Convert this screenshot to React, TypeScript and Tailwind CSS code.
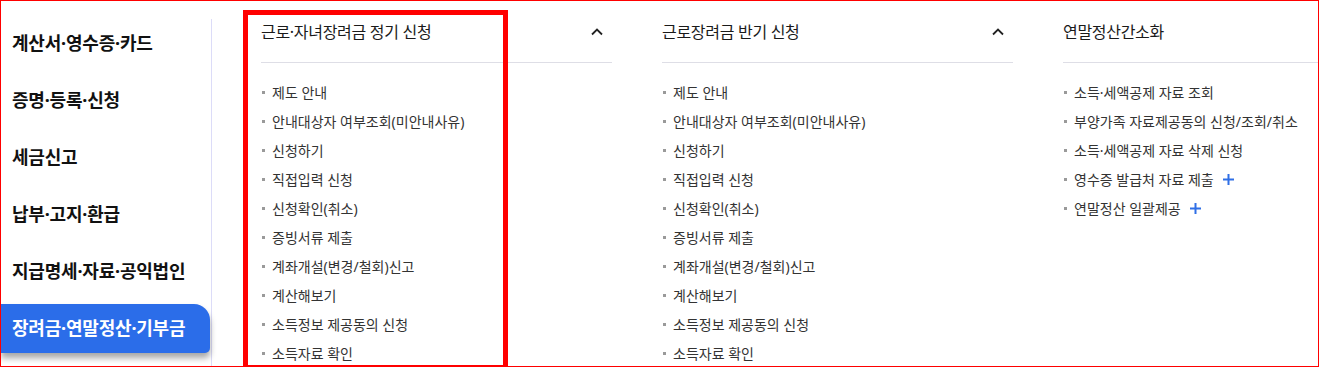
import React from 'react';

const sideMenu = [
    '계산서·영수증·카드',
    '증명·등록·신청',
    '세금신고',
    '납부·고지·환급',
    '지급명세·자료·공익법인',
    '장려금·연말정산·기부금',
];

type Item = { label: string; plus?: boolean };

const columns: { title: string; toggle: boolean; items: Item[] }[] = [
    {
        title: '근로·자녀장려금 정기 신청',
        toggle: true,
        items: [
            { label: '제도 안내' },
            { label: '안내대상자 여부조회(미안내사유)' },
            { label: '신청하기' },
            { label: '직접입력 신청' },
            { label: '신청확인(취소)' },
            { label: '증빙서류 제출' },
            { label: '계좌개설(변경/철회)신고' },
            { label: '계산해보기' },
            { label: '소득정보 제공동의 신청' },
            { label: '소득자료 확인' },
        ],
    },
    {
        title: '근로장려금 반기 신청',
        toggle: true,
        items: [
            { label: '제도 안내' },
            { label: '안내대상자 여부조회(미안내사유)' },
            { label: '신청하기' },
            { label: '직접입력 신청' },
            { label: '신청확인(취소)' },
            { label: '증빙서류 제출' },
            { label: '계좌개설(변경/철회)신고' },
            { label: '계산해보기' },
            { label: '소득정보 제공동의 신청' },
            { label: '소득자료 확인' },
        ],
    },
    {
        title: '연말정산간소화',
        toggle: false,
        items: [
            { label: '소득·세액공제 자료 조회' },
            { label: '부양가족 자료제공동의 신청/조회/취소' },
            { label: '소득·세액공제 자료 삭제 신청' },
            { label: '영수증 발급처 자료 제출', plus: true },
            { label: '연말정산 일괄제공', plus: true },
        ],
    },
];

const ChevronUp = () => (
    <svg width="12" height="8" viewBox="0 0 12 8" fill="none">
        <path d="M1 6.5 L6 1.5 L11 6.5" stroke="#222" strokeWidth="1.8" />
    </svg>
);

const Plus = () => (
    <svg width="11" height="11" viewBox="0 0 11 11" className="ml-[9px] shrink-0">
        <path d="M5.5 0 V11 M0 5.5 H11" stroke="#2f6fe6" strokeWidth="2" />
    </svg>
);

export default function App() {
    return (
        <div
            className="relative w-[1319px] h-[367px] overflow-hidden bg-white border border-[#ff0000] flex"
            style={{ fontFamily: '"Noto Sans", "Noto Sans CJK KR", sans-serif' }}
        >
            {/* left category menu */}
            <div className="w-[211px] shrink-0 mt-[18px] border-r border-[#dcdcf8] flex flex-col gap-[8px]">
                {sideMenu.map((label, i) => {
                    const active = i === sideMenu.length - 1;
                    return (
                        <div
                            key={label}
                            className={
                                active
                                    ? 'h-[49px] w-[209px] flex items-center pl-[11px] text-[18px] font-bold tracking-[-0.2px] text-white bg-[#2b6de9] rounded-tr-[16px] rounded-br-[5px] shadow-[0_5px_6px_rgba(0,0,0,0.35)]'
                                    : 'h-[49px] w-[209px] flex items-center pl-[11px] text-[18px] font-bold tracking-[-0.2px] text-[#111]'
                            }
                        >
                            {label}
                        </div>
                    );
                })}
            </div>

            {/* sub menu columns */}
            <div className="flex gap-[50px] pl-[49px]">
                {columns.map((col) => (
                    <div key={col.title} className="w-[351px] shrink-0">
                        <div className="h-[62px] flex items-center justify-between border-b border-[#dedee6] pr-[9px]">
                            <span className="text-[16px] text-[#1a1a1a] tracking-[-0.3px]">{col.title}</span>
                            {col.toggle && <ChevronUp />}
                        </div>
                        <ul className="pt-[15px]">
                            {col.items.map((item) => (
                                <li key={item.label} className="h-[29px] flex items-center text-[14px] text-[#333]">
                                    <span className="w-[3px] h-[3px] bg-[#9a9a9a] ml-[1px] mr-[7px] shrink-0" />
                                    {item.label}
                                    {item.plus && <Plus />}
                                </li>
                            ))}
                        </ul>
                    </div>
                ))}
            </div>

            {/* annotation frame */}
            <div className="absolute left-[242px] top-[9px] w-[265px] h-[360px] border-[5px] border-[#ff0000] pointer-events-none" />
        </div>
    );
}
